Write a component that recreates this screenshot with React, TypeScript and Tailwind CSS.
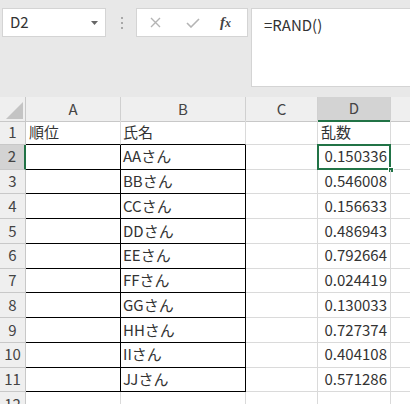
import React from 'react';

const rows: { name: string; value: string }[] = [
  { name: 'AAさん', value: '0.150336' },
  { name: 'BBさん', value: '0.546008' },
  { name: 'CCさん', value: '0.156633' },
  { name: 'DDさん', value: '0.486943' },
  { name: 'EEさん', value: '0.792664' },
  { name: 'FFさん', value: '0.024419' },
  { name: 'GGさん', value: '0.130033' },
  { name: 'HHさん', value: '0.727374' },
  { name: 'IIさん', value: '0.404108' },
  { name: 'JJさん', value: '0.571286' },
];

const font = { fontFamily: '"Noto Sans CJK JP", "Noto Sans", sans-serif' };

function Toolbar() {
  return (
    <div className="flex h-[97px] items-start bg-[#e8e8e8] pt-[8px]">
      <div className="ml-[2px] flex h-[29px] w-[104px] items-center justify-between border border-[#d4d4d4] bg-white pl-[7px] pr-[7px]">
        <span className="text-[15px] text-[#333]">D2</span>
        <svg width="7" height="4" viewBox="0 0 7 4">
          <path d="M0 0h7L3.5 4z" fill="#666" />
        </svg>
      </div>
      <div className="ml-[15px] mt-[9px] flex h-[12px] flex-col justify-between">
        <span className="block h-[2px] w-[2px] bg-[#a8a8a8]" />
        <span className="block h-[2px] w-[2px] bg-[#a8a8a8]" />
        <span className="block h-[2px] w-[2px] bg-[#a8a8a8]" />
      </div>
      <div className="ml-[13px] flex h-[29px] w-[112px] items-center border border-[#d4d4d4] bg-white">
        <svg className="ml-[13px]" width="11" height="11" viewBox="0 0 11 11">
          <path d="M1 1l9 9M10 1l-9 9" stroke="#b4b4b4" strokeWidth="1.4" />
        </svg>
        <svg className="ml-[25px]" width="14" height="10" viewBox="0 0 14 10">
          <path d="M1 5l4 4 8-8" stroke="#b4b4b4" strokeWidth="1.6" fill="none" />
        </svg>
        <span
          className="ml-[20px] text-[15px] font-bold italic text-[#444]"
          style={{ fontFamily: '"Liberation Serif", serif' }}
        >
          f<span className="text-[12px]">x</span>
        </span>
      </div>
      <div className="ml-[3px] h-[79px] flex-1 border border-r-0 border-[#d4d4d4] bg-white pl-[12px] pt-[3px]">
        <span className="text-[15px] text-[#333]">=RAND()</span>
      </div>
    </div>
  );
}

function HeaderCell({ label, selected }: { label: string; selected?: boolean }) {
  return (
    <div
      className={`flex items-center justify-center border-r border-[#d0d0d0] text-[15px] text-[#444] ${
        selected ? 'border-b-2 border-b-[#217346] bg-[#d3d3d3]' : 'border-b border-b-[#c8c8c8] bg-[#efefef]'
      }`}
    >
      {label}
    </div>
  );
}

export default function App() {
  const cols = 'grid grid-cols-[26px_95px_125px_72px_73px_1fr]';
  return (
    <div className="h-[404px] w-[410px] overflow-hidden bg-white text-[#333]" style={font}>
      <Toolbar />
      <div className={`${cols} h-[23px]`}>
        <div className="relative border-r border-b border-[#c8c8c8] bg-[#efefef]">
          <svg className="absolute bottom-[2px] right-[2px]" width="17" height="17" viewBox="0 0 17 17">
            <path d="M17 0V17H0z" fill="#c4c4c4" />
          </svg>
        </div>
        <HeaderCell label="A" />
        <HeaderCell label="B" />
        <HeaderCell label="C" />
        <HeaderCell label="D" selected />
        <div className="border-b border-[#c8c8c8] bg-[#efefef]" />
      </div>

      {Array.from({ length: 12 }, (_, i) => {
        const r = i + 1;
        const inBox = r >= 2 && r <= 11;
        const boxBottom = r >= 1 && r <= 11;
        const data = r >= 2 ? rows[r - 2] : undefined;
        const cellA = `${boxBottom ? 'border-b-black' : 'border-b-[#dadada]'} ${
          inBox ? 'border-r-black' : 'border-r-[#dadada]'
        } border-r border-b`;
        return (
          <div key={r} className={`${cols} h-[24.75px]`}>
            <div
              className={`flex items-center justify-center border-b border-[#c8c8c8] text-[15px] text-[#444] ${
                r === 2 ? 'border-r-2 border-r-[#217346] bg-[#d3d3d3]' : 'border-r bg-[#efefef]'
              }`}
            >
              {r}
            </div>
            <div className={`${cellA} flex items-center pl-[3px] text-[15px]`}>
              {r === 1 && <span style={{ color: '#333333' }}>順位</span>}
            </div>
            <div className={`${cellA} flex items-center pl-[2px] text-[15px]`}>
              {r === 1 ? '氏名' : data?.name}
            </div>
            <div className="border-r border-b border-[#dadada]" />
            <div className="relative flex items-center justify-end border-r border-b border-[#dadada] pr-[3px] text-[15px]">
              {r === 1 ? <span className="mr-auto pl-[3px]">乱数</span> : data?.value}
              {r === 2 && (
                <>
                  <div className="pointer-events-none absolute -left-[1px] -top-[1px] bottom-[-1px] right-[-1px] border-2 border-[#217346]" />
                  <div className="absolute -bottom-[4px] -right-[4px] h-[6px] w-[6px] border border-white bg-[#217346]" />
                </>
              )}
            </div>
            <div className="border-b border-[#dadada]" />
          </div>
        );
      })}
    </div>
  );
}
